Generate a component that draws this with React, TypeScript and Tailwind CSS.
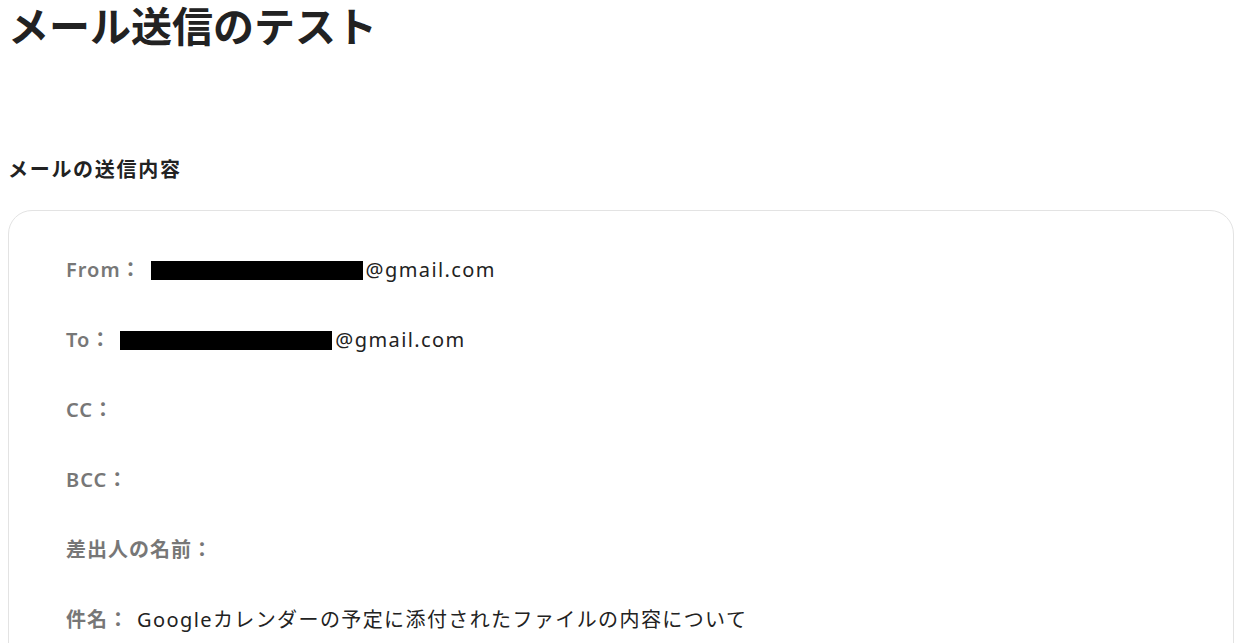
import React from 'react';

const font = { fontFamily: '"Noto Sans", "Noto Sans CJK JP", sans-serif' };

type Row = { label: string; value?: string; redacted?: boolean };

const rows: Row[] = [
  { label: 'From：', value: '@gmail.com', redacted: true },
  { label: 'To：', value: '@gmail.com', redacted: true },
  { label: 'CC：' },
  { label: 'BCC：' },
  { label: '差出人の名前：' },
  { label: '件名：', value: 'Googleカレンダーの予定に添付されたファイルの内容について' },
];

const MailRow: React.FC<{ row: Row }> = ({ row }) => (
  <div className="flex items-center h-[30px] text-[20px] leading-[30px]">
    <span className="font-semibold text-[#777777] tracking-[1px]">{row.label}</span>
    {row.redacted && <span className="ml-[9px] inline-block w-[212px] h-[19px] bg-black" />}
    {row.value && (
      <span className={`text-[#222222] tracking-[1.4px] ${row.redacted ? 'ml-[3px]' : 'ml-[8px]'}`}>{row.value}</span>
    )}
  </div>
);

export default function App() {
  return (
    <div className="min-h-screen bg-white px-2 overflow-hidden" style={font}>
      <h1 className="text-[41px] leading-[52px] font-bold text-[#222222]">メール送信のテスト</h1>
      <h2 className="mt-[104px] text-[20px] leading-[28px] font-bold text-[#222222] tracking-[1.7px]">メールの送信内容</h2>
      <div className="mt-[26px] border border-[#e3e3e3] rounded-[24px] px-[57px] pt-[44px] pb-10 flex flex-col gap-10">
        {rows.map(r => (
          <MailRow key={r.label} row={r} />
        ))}
      </div>
    </div>
  );
}
